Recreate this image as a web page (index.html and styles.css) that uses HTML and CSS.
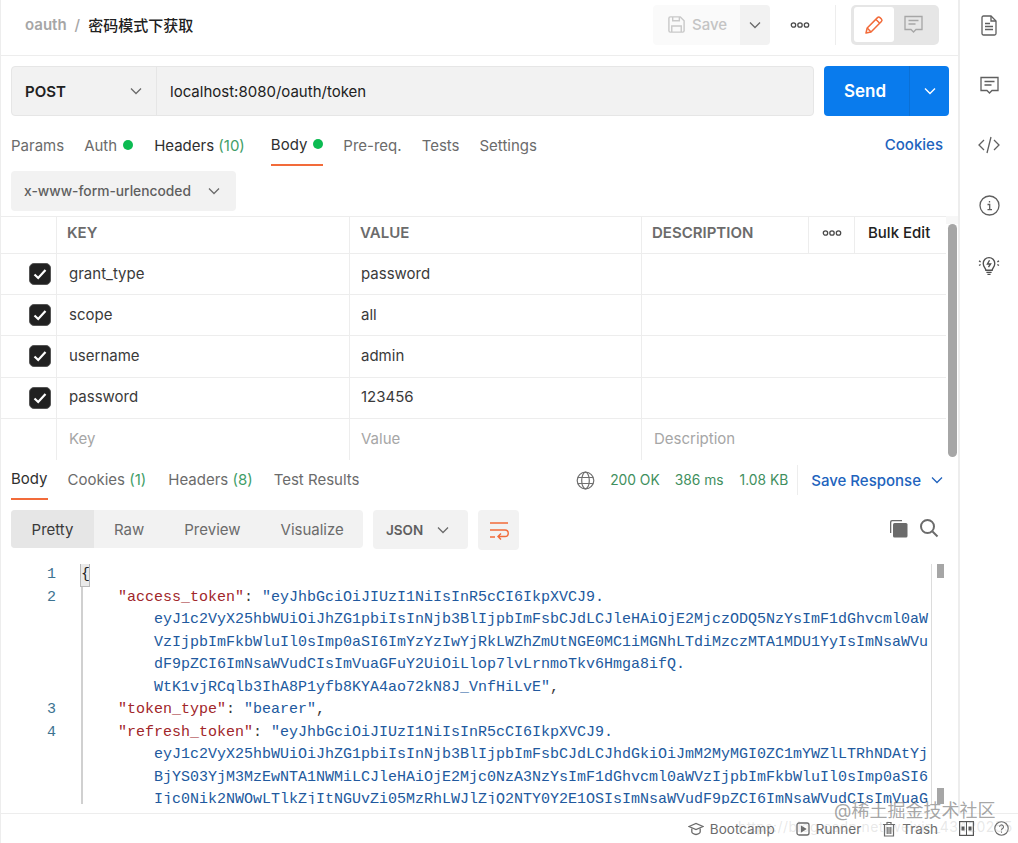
FILE: index.html
```html
<!DOCTYPE html>
<html lang="zh">
<head>
<meta charset="utf-8">
<title>oauth / 密码模式下获取</title>
<link rel="stylesheet" href="styles.css">
</head>
<body>
<div class="app">
  <main class="main">
    <header class="top">
      <div class="crumb"><span class="crumb-parent">oauth</span><span class="crumb-sep">/</span><span class="crumb-name">密码模式下获取</span></div>
      <div class="save-group">
        <div class="save">
          <svg width="19" height="19" viewBox="0 0 20 20" fill="none" stroke="#c9c9c9" stroke-width="1.5"><path d="M2 3.5a1.5 1.5 0 0 1 1.5-1.5H14l4 4v10.500a1.500 1.500 0 0 1-1.500 1.500h-13A1.500 1.500 0 0 1 2 16.500z"/><path d="M6 2v4h7V2M5 18v-6.500h10V18"/></svg>
          <span>Save</span>
        </div>
        <div class="save-more"><svg class="chev" width="12" height="8" viewBox="0 0 12 8"><path d="M1 1.500l5 5 5-5"/></svg></div>
      </div>
      <svg class="dots dots-top" width="20" height="8" viewBox="0 0 20 8"><circle cx="3.500" cy="4" r="2.200"/><circle cx="10" cy="4" r="2.200"/><circle cx="16.500" cy="4" r="2.200"/></svg>
      <div class="vdiv"></div>
      <div class="mode">
        <div class="mode-on">
          <svg width="20" height="20" viewBox="0 0 20 20" fill="none" stroke="#f26b3a" stroke-width="1.500" stroke-linejoin="round"><path d="M2 18l1.200-5L13.500 2.600a1.800 1.800 0 0 1 2.500 0l1.400 1.400a1.800 1.800 0 0 1 0 2.500L7 17z"/><path d="M12 4.500l3.500 3.500M3.200 13L7 17"/></svg>
        </div>
        <div class="mode-off">
          <svg width="19" height="19" viewBox="0 0 19 19" fill="none" stroke="#a6a6a6" stroke-width="1.300"><path d="M1 1.500h17v13h-6l-2.500 2.500-2.500-2.500H1z"/><path d="M4.500 5.500h10M4.500 9h7"/></svg>
        </div>
      </div>
    </header>

    <section class="url-row">
      <div class="url-box">
        <div class="method"><span>POST</span><svg class="chev" width="12" height="8" viewBox="0 0 12 8"><path d="M1 1.500l5 5 5-5"/></svg></div>
        <div class="url">localhost:8080/oauth/token</div>
      </div>
      <div class="send">
        <span class="send-label">Send</span>
        <span class="send-more"><svg width="12" height="8" viewBox="0 0 12 8" fill="none" stroke="#fff" stroke-width="1.400"><path d="M1 1.500l5 5 5-5"/></svg></span>
      </div>
    </section>

    <nav class="req-tabs">
      <span class="tab t-params">Params</span>
      <span class="tab t-auth">Auth<i class="dot"></i></span>
      <span class="tab t-headers dark">Headers <em>(10)</em></span>
      <span class="tab t-body dark active">Body<i class="dot"></i></span>
      <span class="tab t-pre">Pre-req.</span>
      <span class="tab t-tests">Tests</span>
      <span class="tab">Settings</span>
      <span class="cookies">Cookies</span>
    </nav>

    <div class="body-type"><span>x-www-form-urlencoded</span><svg class="chev" width="12" height="8" viewBox="0 0 12 8"><path d="M1 1.500l5 5 5-5"/></svg></div>

    <section class="table-wrap">
      <div class="table">
        <div class="row head">
          <div class="c c0"></div>
          <div class="c c1">KEY</div>
          <div class="c c2">VALUE</div>
          <div class="c c3">DESCRIPTION</div>
          <div class="c c4"><svg class="dots" width="20" height="8" viewBox="0 0 20 8"><circle cx="3.500" cy="4" r="2.200"/><circle cx="10" cy="4" r="2.200"/><circle cx="16.500" cy="4" r="2.200"/></svg></div>
          <div class="c c5">Bulk Edit</div>
        </div>
        <div class="row">
          <div class="c c0"><span class="check"><svg width="14" height="12" viewBox="0 0 14 12"><path d="M1.500 6.500l3.700 3.500 7.300-8"/></svg></span></div>
          <div class="c c1">grant_type</div><div class="c c2">password</div><div class="c c6"></div>
        </div>
        <div class="row">
          <div class="c c0"><span class="check"><svg width="14" height="12" viewBox="0 0 14 12"><path d="M1.500 6.500l3.700 3.500 7.300-8"/></svg></span></div>
          <div class="c c1">scope</div><div class="c c2">all</div><div class="c c6"></div>
        </div>
        <div class="row">
          <div class="c c0"><span class="check"><svg width="14" height="12" viewBox="0 0 14 12"><path d="M1.500 6.500l3.700 3.500 7.300-8"/></svg></span></div>
          <div class="c c1">username</div><div class="c c2">admin</div><div class="c c6"></div>
        </div>
        <div class="row">
          <div class="c c0"><span class="check"><svg width="14" height="12" viewBox="0 0 14 12"><path d="M1.500 6.500l3.700 3.500 7.300-8"/></svg></span></div>
          <div class="c c1">password</div><div class="c c2">123456</div><div class="c c6"></div>
        </div>
        <div class="row ph">
          <div class="c c0"></div>
          <div class="c c1">Key</div><div class="c c2">Value</div><div class="c c6">Description</div>
        </div>
      </div>
      <div class="table-scroll"><div class="table-thumb"></div></div>
    </section>

    <section class="res-bar">
      <span class="rtab r-body dark active">Body</span>
      <span class="rtab r-cookies">Cookies <em>(1)</em></span>
      <span class="rtab">Headers <em>(8)</em></span>
      <span class="rtab">Test Results</span>
      <div class="status">
        <svg width="19" height="19" viewBox="0 0 19 19" fill="none" stroke="#707070" stroke-width="1.200"><circle cx="9.500" cy="9.500" r="8.300"/><ellipse cx="9.500" cy="9.500" rx="3.800" ry="8.300"/><path d="M1.800 6.500h15.400M1.800 12.500h15.400"/></svg>
        <span class="ok s-code">200 OK</span><span class="ok s-ms">386 ms</span><span class="ok s-kb">1.08 KB</span>
      </div>
      <div class="save-res"><span>Save Response</span><svg width="12" height="8" viewBox="0 0 12 8" fill="none" stroke="#2163bd" stroke-width="1.300"><path d="M1 1.500l5 5 5-5"/></svg></div>
    </section>

    <section class="res-tools">
      <div class="views">
        <span class="view on">Pretty</span><span class="view v-raw">Raw</span><span class="view v-next">Preview</span><span class="view v-next">Visualize</span>
      </div>
      <div class="fmt"><span>JSON</span><svg class="chev" width="12" height="8" viewBox="0 0 12 8"><path d="M1 1.500l5 5 5-5"/></svg></div>
      <div class="wrap-btn">
        <svg width="20" height="19" viewBox="0 0 20 19" fill="none" stroke="#f26b3a" stroke-width="1.400"><path d="M1 2h18M1 9h15a2.800 2.800 0 0 1 0 6.500H9.500M12 12.500l-3 3 3 3M1 16h5"/></svg>
      </div>
      <div class="res-icons">
        <svg width="19" height="19" viewBox="0 0 19 19"><path d="M1 14V3a2 2 0 0 1 2-2h10v1.300H3.500a1.200 1.200 0 0 0-1.200 1.200V14z" fill="#6b6b6b"/><rect x="4" y="4" width="14.500" height="14.500" rx="1.500" fill="#6b6b6b"/></svg>
        <svg width="20" height="20" viewBox="0 0 20 20" fill="none" stroke="#6b6b6b" stroke-width="2"><circle cx="8.500" cy="8.500" r="6.500"/><path d="M13.500 13.500L18.500 18.500"/></svg>
      </div>
    </section>

    <section class="code">
      <div class="ln"><span class="no">1</span><span class="tx"><span class="brace">{</span></span></div>
      <div class="ln"><span class="no">2</span><span class="tx i1"><span class="k">"access_token"</span>: <span class="s">"eyJhbGciOiJIUzI1NiIsInR5cCI6IkpXVCJ9.</span></span></div>
      <div class="ln"><span class="no"></span><span class="tx i2 s">eyJ1c2VyX25hbWUiOiJhZG1pbiIsInNjb3BlIjpbImFsbCJdLCJleHAiOjE2MjczODQ5NzYsImF1dGhvcml0aW</span></div>
      <div class="ln"><span class="no"></span><span class="tx i2 s">VzIjpbImFkbWluIl0sImp0aSI6ImYzYzIwYjRkLWZhZmUtNGE0MC1iMGNhLTdiMzczMTA1MDU1YyIsImNsaWVu</span></div>
      <div class="ln"><span class="no"></span><span class="tx i2 s">dF9pZCI6ImNsaWVudCIsImVuaGFuY2UiOiLlop7lvLrnmoTkv6Hmga8ifQ.</span></div>
      <div class="ln"><span class="no"></span><span class="tx i2"><span class="s">WtK1vjRCqlb3IhA8P1yfb8KYA4ao72kN8J_VnfHiLvE"</span>,</span></div>
      <div class="ln"><span class="no">3</span><span class="tx i1"><span class="k">"token_type"</span>: <span class="s">"bearer"</span>,</span></div>
      <div class="ln"><span class="no">4</span><span class="tx i1"><span class="k">"refresh_token"</span>: <span class="s">"eyJhbGciOiJIUzI1NiIsInR5cCI6IkpXVCJ9.</span></span></div>
      <div class="ln"><span class="no"></span><span class="tx i2 s">eyJ1c2VyX25hbWUiOiJhZG1pbiIsInNjb3BlIjpbImFsbCJdLCJhdGkiOiJmM2MyMGI0ZC1mYWZlLTRhNDAtYj</span></div>
      <div class="ln"><span class="no"></span><span class="tx i2 s">BjYS03YjM3MzEwNTA1NWMiLCJleHAiOjE2Mjc0NzA3NzYsImF1dGhvcml0aWVzIjpbImFkbWluIl0sImp0aSI6</span></div>
      <div class="ln"><span class="no"></span><span class="tx i2 s">Ijc0Nik2NWOwLTlkZjItNGUvZi05MzRhLWJlZjQ2NTY0Y2E1OSIsImNsaWVudF9pZCI6ImNsaWVudCIsImVuaG</span></div>
      <div class="code-rail"></div>
      <div class="code-thumb top-thumb"></div>
      <div class="code-thumb bottom-thumb"></div>
    </section>

    <footer class="foot">
      <span class="fi"><svg width="16" height="14" viewBox="0 0 16 14" fill="none" stroke="#6b6b6b" stroke-width="1.300"><path d="M1 4.500L8 1.500l7 3-7 3z"/><path d="M3.800 6.500v3.200c0 1.300 2 2.800 4.200 2.800s4.200-1.500 4.200-2.800V6.500"/></svg>Bootcamp</span>
      <span class="fi"><svg width="14" height="14" viewBox="0 0 14 14" fill="none" stroke="#6b6b6b" stroke-width="1.300"><rect x="1" y="1" width="12" height="12" rx="2"/><path d="M5.500 4.500l4 2.500-4 2.500z" fill="#6b6b6b"/></svg>Runner</span>
      <span class="fi"><svg width="14" height="16" viewBox="0 0 14 16" fill="none" stroke="#6b6b6b" stroke-width="1.200"><path d="M1 3.500h12M5 3.500V1.500h4v2M2.500 3.500V15h9V3.500M5.200 6v7M7 6v7M8.800 6v7"/></svg>Trash</span>
      <span class="fl"><svg width="15" height="15" viewBox="0 0 15 15"><rect x=".6" y=".6" width="13.800" height="13.800" fill="none" stroke="#555" stroke-width="1.200"/><path d="M7.500 0v15" stroke="#555"/><rect x="2.500" y="5.500" width="3" height="4" fill="#555"/><rect x="9.500" y="5.500" width="3" height="4" fill="#555"/></svg></span>
      <svg class="help" width="15" height="15" viewBox="0 0 15 15" fill="none" stroke="#6b6b6b" stroke-width="1.100"><circle cx="7.500" cy="7.500" r="6.700"/><path d="M5.500 5.800a2 2 0 1 1 3 1.800c-.7.400-1 .8-1 1.600M7.500 10.500v1.200"/></svg>
    </footer>
  </main>

  <aside class="side">
    <svg width="16" height="21" viewBox="0 0 16 21" fill="none" stroke="#5f5f5f" stroke-width="1.300"><path d="M1 2.500A1.500 1.500 0 0 1 2.500 1H10l5 5v12.500a1.500 1.500 0 0 1-1.500 1.500h-11A1.500 1.500 0 0 1 1 18.500z"/><path d="M10 1v5h5M4 8.500h5M4 11.500h8M4 14.500h8"/></svg>
    <svg width="19" height="19" viewBox="0 0 19 19" fill="none" stroke="#5f5f5f" stroke-width="1.300"><path d="M1 1.500h17v13h-6l-2.500 2.500-2.500-2.500H1z"/><path d="M4.500 5.500h10M4.500 9h7"/></svg>
    <svg width="22" height="18" viewBox="0 0 22 18" fill="none" stroke="#5f5f5f" stroke-width="1.300"><path d="M6 4L1 9l5 5M16 4l5 5-5 5M13 1L9 17"/></svg>
    <svg width="21" height="21" viewBox="0 0 21 21" fill="none" stroke="#5f5f5f" stroke-width="1.300"><circle cx="10.500" cy="10.500" r="9.500"/><path d="M8.500 9.500h2.200v5M8.500 14.700h4.500M10.500 6v1.500"/></svg>
    <svg width="22" height="22" viewBox="0 0 21 21" fill="none" stroke="#4f4f4f" stroke-width="1.300"><path d="M7.500 15.500c0-2-2.500-3-2.500-6.500a5.500 5.500 0 0 1 11 0c0 3.500-2.500 4.500-2.500 6.500zM8 17.500h5M9 19.500h3M11 6l-2 3.500h3L10 12.500M1 6.500l1.500 1M1 11l1.500-1M20 6.500l-1.500 1M20 11l-1.500-1"/></svg>
  </aside>

  <div class="mark mark-a">@稀土掘金技术社区</div>
  <div class="mark mark-b">https://blog.csdn.net/weixin_43420255</div>
</div>
</body>
</html>
```
FILE: styles.css
```css
* { box-sizing: border-box; }
html, body { margin: 0; padding: 0; background: #fff; }
body {
  width: 1018px;
  height: 843px;
  overflow: hidden;
  font-family: Inter, "Noto Sans CJK SC", sans-serif;
  font-size: 15px;
  color: #6b6b6b;
}
svg { display: block; flex: none; }
em { font-style: normal; color: #3f9e68; }
.dark { color: #2f2f2f; }
.app { position: relative; display: flex; height: 843px; }
.main {
  width: 958px;
  border-left: 1px solid #ededed;
  display: flex;
  flex-direction: column;
  flex: none;
}
.chev { fill: none; stroke: #6b6b6b; stroke-width: 1.300; }
.dots { fill: none; stroke: #4a4a4a; stroke-width: 1.300; }

/* header */
.top {
  height: 56px;
  border-bottom: 1px solid #ededed;
  display: flex;
  align-items: center;
  padding: 0 19px 6px 24px;
  flex: none;
}
.crumb { display: flex; align-items: center; margin-right: auto; }
.crumb-parent { color: #a6a6a6; font-weight: 600; }
.crumb-sep { color: #a6a6a6; margin: 0 8px; font-weight: 500; }
.crumb-name { color: #212121; font-weight: 500; }
.save-group { display: flex; height: 40px; border-radius: 4px; overflow: hidden; }
.save {
  width: 87px;
  background: #fafafa;
  display: flex;
  align-items: center;
  gap: 6px;
  padding-left: 14px;
  color: #c4c4c4;
  font-weight: 500;
}
.save-more { width: 30px; background: #f2f2f2; display: flex; align-items: center; justify-content: center; }
.dots-top { margin-left: 20px; }
.vdiv { width: 1px; height: 40px; background: #ededed; margin: 0 15px 0 25px; }
.mode {
  width: 88px;
  height: 40px;
  background: #e6e6e6;
  border-radius: 5px;
  display: flex;
  align-items: center;
  padding: 3px;
}
.mode-on { width: 40px; height: 35px; background: #fff; border-radius: 3px; display: flex; align-items: center; justify-content: center; }
.mode-off { flex: 1; display: flex; align-items: center; justify-content: center; padding-right: 3px; }

/* url */
.url-row { display: flex; gap: 10px; padding: 10px 8px 0 10px; flex: none; }
.url-box {
  width: 803px;
  height: 50px;
  background: #f2f2f2;
  border: 1px solid #e6e6e6;
  border-radius: 4px;
  display: flex;
  align-items: center;
}
.method {
  width: 145px;
  height: 100%;
  border-right: 1px solid #e6e6e6;
  display: flex;
  align-items: center;
  justify-content: space-between;
  padding: 0 14px 0 13px;
  color: #212121;
  font-weight: 600;
}
.url { padding-left: 13px; color: #212121; }
.send {
  width: 125px;
  height: 50px;
  background: #097bed;
  border-radius: 4px;
  color: #fff;
  display: flex;
  align-items: center;
  font-weight: 600;
  font-size: 17px;
}
.send-label { width: 85px; padding-left: 20px; }
.send-more { flex: 1; height: 100%; border-left: 1px solid #0a70d6; display: flex; align-items: center; justify-content: center; }

/* tabs */
.req-tabs { display: flex; align-items: flex-start; height: 49px; padding: 15px 15px 0 10px; flex: none; }
.tab { display: flex; align-items: center; height: 35px; padding-bottom: 7px; white-space: pre; }
.dot { width: 10px; height: 10px; border-radius: 50%; background: #0cbb52; margin-left: 6px; }
.t-params { margin-right: 20px; }
.t-auth { margin-right: 21px; }
.t-headers { margin-right: 26px; }
.t-body { margin-right: 20px; }
.t-pre { margin-right: 20px; }
.t-tests { margin-right: 20px; }
.active { border-bottom: 2px solid #f26b3a; }
.cookies { margin-left: auto; color: #2163bd; font-weight: 500; line-height: 28px; }
.body-type {
  width: 225px;
  height: 40px;
  margin: 6px 0 0 10px;
  background: #f2f2f2;
  border-radius: 4px;
  display: flex;
  align-items: center;
  justify-content: space-between;
  padding: 0 16px 0 13px;
  color: #5f5f5f;
  font-weight: 500;
  font-size: 13.800px;
  flex: none;
}

/* table */
.table-wrap { display: flex; margin-top: 5px; height: 244px; flex: none; }
.table { width: 945px; border-top: 1px solid #ededed; flex: none; }
.row { display: flex; height: 41.200px; border-bottom: 1px solid #ededed; color: #3a3a3a; }
.row.head { height: 37px; color: #6b6b6b; font-weight: 600; }
.row.ph { color: #a6a6a6; border-bottom: 0; }
.c { display: flex; align-items: center; border-right: 1px solid #ededed; flex: none; padding-bottom: 2px; }
.head .c { padding-bottom: 5px; }
.c0 { width: 56px; justify-content: flex-end; padding-right: 5px; padding-bottom: 0; }
.c1 { width: 293px; padding-left: 12px; }
.c2 { width: 292px; padding-left: 11px; }
.c3 { width: 167px; padding-left: 10px; }
.c4 { width: 46px; justify-content: center; }
.c5 { width: 90px; border-right: 0; padding-left: 13px; color: #212121; font-weight: 500; }
.c6 { width: 303px; border-right: 0; padding-left: 12px; }
.head .c1 { padding-left: 10px; }
.head .c2 { padding-left: 10px; }
.check {
  width: 22px;
  height: 22px;
  border-radius: 5px;
  background: #212121;
  display: flex;
  align-items: center;
  justify-content: center;
  border: 1px solid #555;
}
.check svg { fill: none; stroke: #fff; stroke-width: 2.200; }
.table-scroll { width: 12px; padding: 8px 1px 0; background: linear-gradient(#f7f7f7, #f7f7f7) no-repeat 0 0 / 100% 8px; }
.table-thumb { width: 9px; height: 233px; margin-left: 1px; background: #a6a6a6; border-radius: 5px; }

/* response */
.res-bar { display: flex; align-items: flex-start; height: 45px; padding: 5px 15px 0 10px; flex: none; }
.rtab { display: flex; align-items: center; height: 35px; padding-bottom: 6px; margin-right: 21px; white-space: pre; }
.r-body { margin-right: 20px; }
.r-cookies { margin-right: 22px; }
.status { margin-left: auto; display: flex; align-items: center; height: 30px; padding-right: 9px; border-right: 1px solid #ededed; }
.ok { color: #3f8f5e; font-size: 13.800px; }
.s-code { margin-left: 15px; }
.s-ms { margin-left: 15px; }
.s-kb { margin-left: 16px; }
.save-res { display: flex; align-items: center; gap: 10px; height: 30px; margin-left: 13px; color: #2163bd; font-weight: 500; }
.res-tools { display: flex; align-items: flex-start; height: 59px; padding: 5px 10px 0 10px; flex: none; }
.views { width: 352px; height: 38px; background: #f2f2f2; border-radius: 4px; display: flex; align-items: center; overflow: hidden; }
.view { height: 100%; display: flex; align-items: center; }
.view.on { width: 83px; background: #e6e6e6; justify-content: center; color: #3a3a3a; }
.v-raw { margin-left: 20px; }
.v-next { margin-left: 40px; }
.fmt { width: 95px; height: 39px; margin-left: 10px; background: #f2f2f2; border-radius: 4px; display: flex; align-items: center; gap: 14px; padding-left: 13px; color: #5f5f5f; font-weight: 600; font-size: 13.500px; }
.wrap-btn { width: 41px; height: 40px; margin-left: 10px; background: #f2f2f2; border-radius: 4px; display: flex; align-items: center; justify-content: center; }
.res-icons { margin-left: auto; margin-right: 9px; display: flex; gap: 11px; align-items: center; height: 36px; }

/* code */
.code { position: relative; height: 240px; overflow: hidden; font-family: "Liberation Mono", monospace; font-size: 15px; line-height: 22.500px; color: #3a3a3a; flex: none; }
.ln { display: flex; height: 22.500px; }
.no { width: 80px; padding-right: 25px; text-align: right; color: #3d7391; flex: none; }
.tx { white-space: pre; border-left: 2px solid #d0d0d0; }
.i1 { padding-left: 35px; }
.i2 { padding-left: 71px; }
.k { color: #a1262a; }
.s { color: #21599e; }
.brace { display: inline-block; width: 8px; height: 22px; margin-left: -2px; background: #eaeaea; outline: 1px solid #b8b8b8; color: #222; text-align: center; }
.code-rail { position: absolute; left: 930px; top: 0; bottom: 0; width: 1px; background: #dcdcdc; }
.code-thumb { position: absolute; left: 936px; width: 7px; background: #a6a6a6; }
.top-thumb { top: 0; height: 14px; }
.bottom-thumb { top: 224px; height: 16px; }

/* footer */
.foot {
  margin-top: 9px;
  border-top: 1px solid #ededed;
  height: 30px;
  display: flex;
  align-items: center;
  color: #6b6b6b;
  font-size: 13.500px;
  justify-content: flex-end;
  width: 1017px;
  flex: none;
  position: relative;
  background: #fff;
}
.fi { display: flex; align-items: center; gap: 6px; margin-right: 21px; }
.fl { margin-right: 20px; }
.help { margin-right: 9px; }

/* sidebar */
.side {
  width: 60px;
  border-left: 2px solid #ededed;
  display: grid;
  grid-auto-rows: 20px;
  row-gap: 40px;
  align-items: center;
  justify-items: center;
  align-content: start;
  padding-top: 15px;
  height: 813px;
  flex: none;
}

/* watermark */
.mark { position: absolute; white-space: nowrap; pointer-events: none; }
.mark-a { left: 834px; top: 796px; font-size: 18px; color: rgba(90, 90, 90, .55); }
.mark-b { left: 738px; top: 818px; font-size: 14px; color: rgba(150, 150, 150, .22); letter-spacing: .4px; }
```
